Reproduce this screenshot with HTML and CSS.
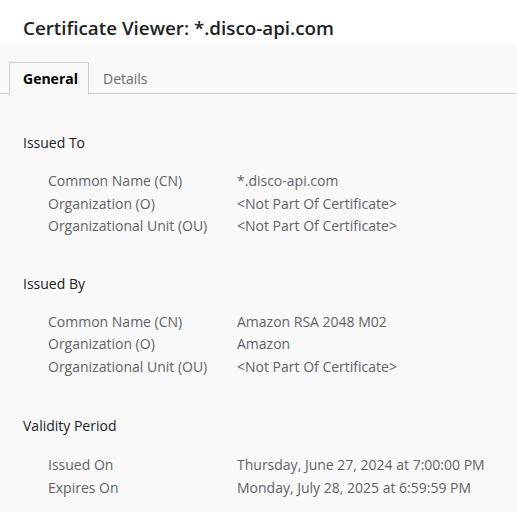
FILE: index.html
```html
<!DOCTYPE html>
<html lang="en">
<head>
<meta charset="utf-8">
<title>Certificate Viewer</title>
<link rel="stylesheet" href="styles.css">
</head>
<body>
<header class="header">
  <h1 class="title">Certificate Viewer: *.disco-api.com</h1>
</header>
<main class="panel">
  <nav class="tabs">
    <div class="tab tab-active">General</div>
    <div class="tab">Details</div>
  </nav>
  <section class="section">
    <h2 class="section-title">Issued To</h2>
    <div class="rows">
      <div class="label">Common Name (CN)</div><div class="value">*.disco-api.com</div>
      <div class="label">Organization (O)</div><div class="value">&lt;Not Part Of Certificate&gt;</div>
      <div class="label">Organizational Unit (OU)</div><div class="value">&lt;Not Part Of Certificate&gt;</div>
    </div>
  </section>
  <section class="section">
    <h2 class="section-title">Issued By</h2>
    <div class="rows">
      <div class="label">Common Name (CN)</div><div class="value">Amazon RSA 2048 M02</div>
      <div class="label">Organization (O)</div><div class="value">Amazon</div>
      <div class="label">Organizational Unit (OU)</div><div class="value">&lt;Not Part Of Certificate&gt;</div>
    </div>
  </section>
  <section class="section section-validity">
    <h2 class="section-title">Validity Period</h2>
    <div class="rows rows-validity">
      <div class="label">Issued On</div><div class="value">Thursday, June 27, 2024 at 7:00:00 PM</div>
      <div class="label">Expires On</div><div class="value">Monday, July 28, 2025 at 6:59:59 PM</div>
    </div>
  </section>
</main>
</body>
</html>
```

FILE: styles.css
```css
* { box-sizing: border-box; }
html, body { margin: 0; padding: 0; }
body {
  font-family: "Open Sans", "Noto Sans", sans-serif;
  background: #f9f9f9;
  color: #202124;
  height: 512px;
  overflow: hidden;
}
.header {
  background: #ffffff;
  height: 43px;
  padding-left: 23px;
}
.title {
  margin: 0;
  padding-top: 15px;
  font-size: 18.8px;
  line-height: 26px;
  font-weight: 600;
  color: #202124;
}
.panel {
  padding-top: 19px;
}
.tabs {
  display: flex;
  padding-left: 9px;
  border-bottom: 1px solid #cfcfcf;
  height: 32px;
}
.tab {
  height: 32px;
  padding: 0 14px 0 13px;
  font-size: 14px;
  line-height: 31px;
  color: #6b6b6b;
  border: 1px solid transparent;
  border-bottom: none;
}
.tab-active {
  color: #000;
  font-weight: 700;
  padding: 0 10px 0 13px;
  border-color: #cfcfcf;
  background: #f9f9f9;
  height: 33px;
}
.section {
  padding-left: 23px;
  margin-top: 38px;
}
.section + .section { margin-top: 35px; }
.section + .section-validity { margin-top: 37px; }
.section-title {
  margin: 0;
  font-size: 14px;
  font-weight: 400;
  line-height: 22px;
  color: #202124;
}
.rows {
  display: grid;
  grid-template-columns: 189px 1fr;
  margin-top: 16px;
  padding-left: 25px;
  font-size: 14px;
  line-height: 22.5px;
  color: #5f6368;
}
.rows-validity { margin-top: 17px; }
```
